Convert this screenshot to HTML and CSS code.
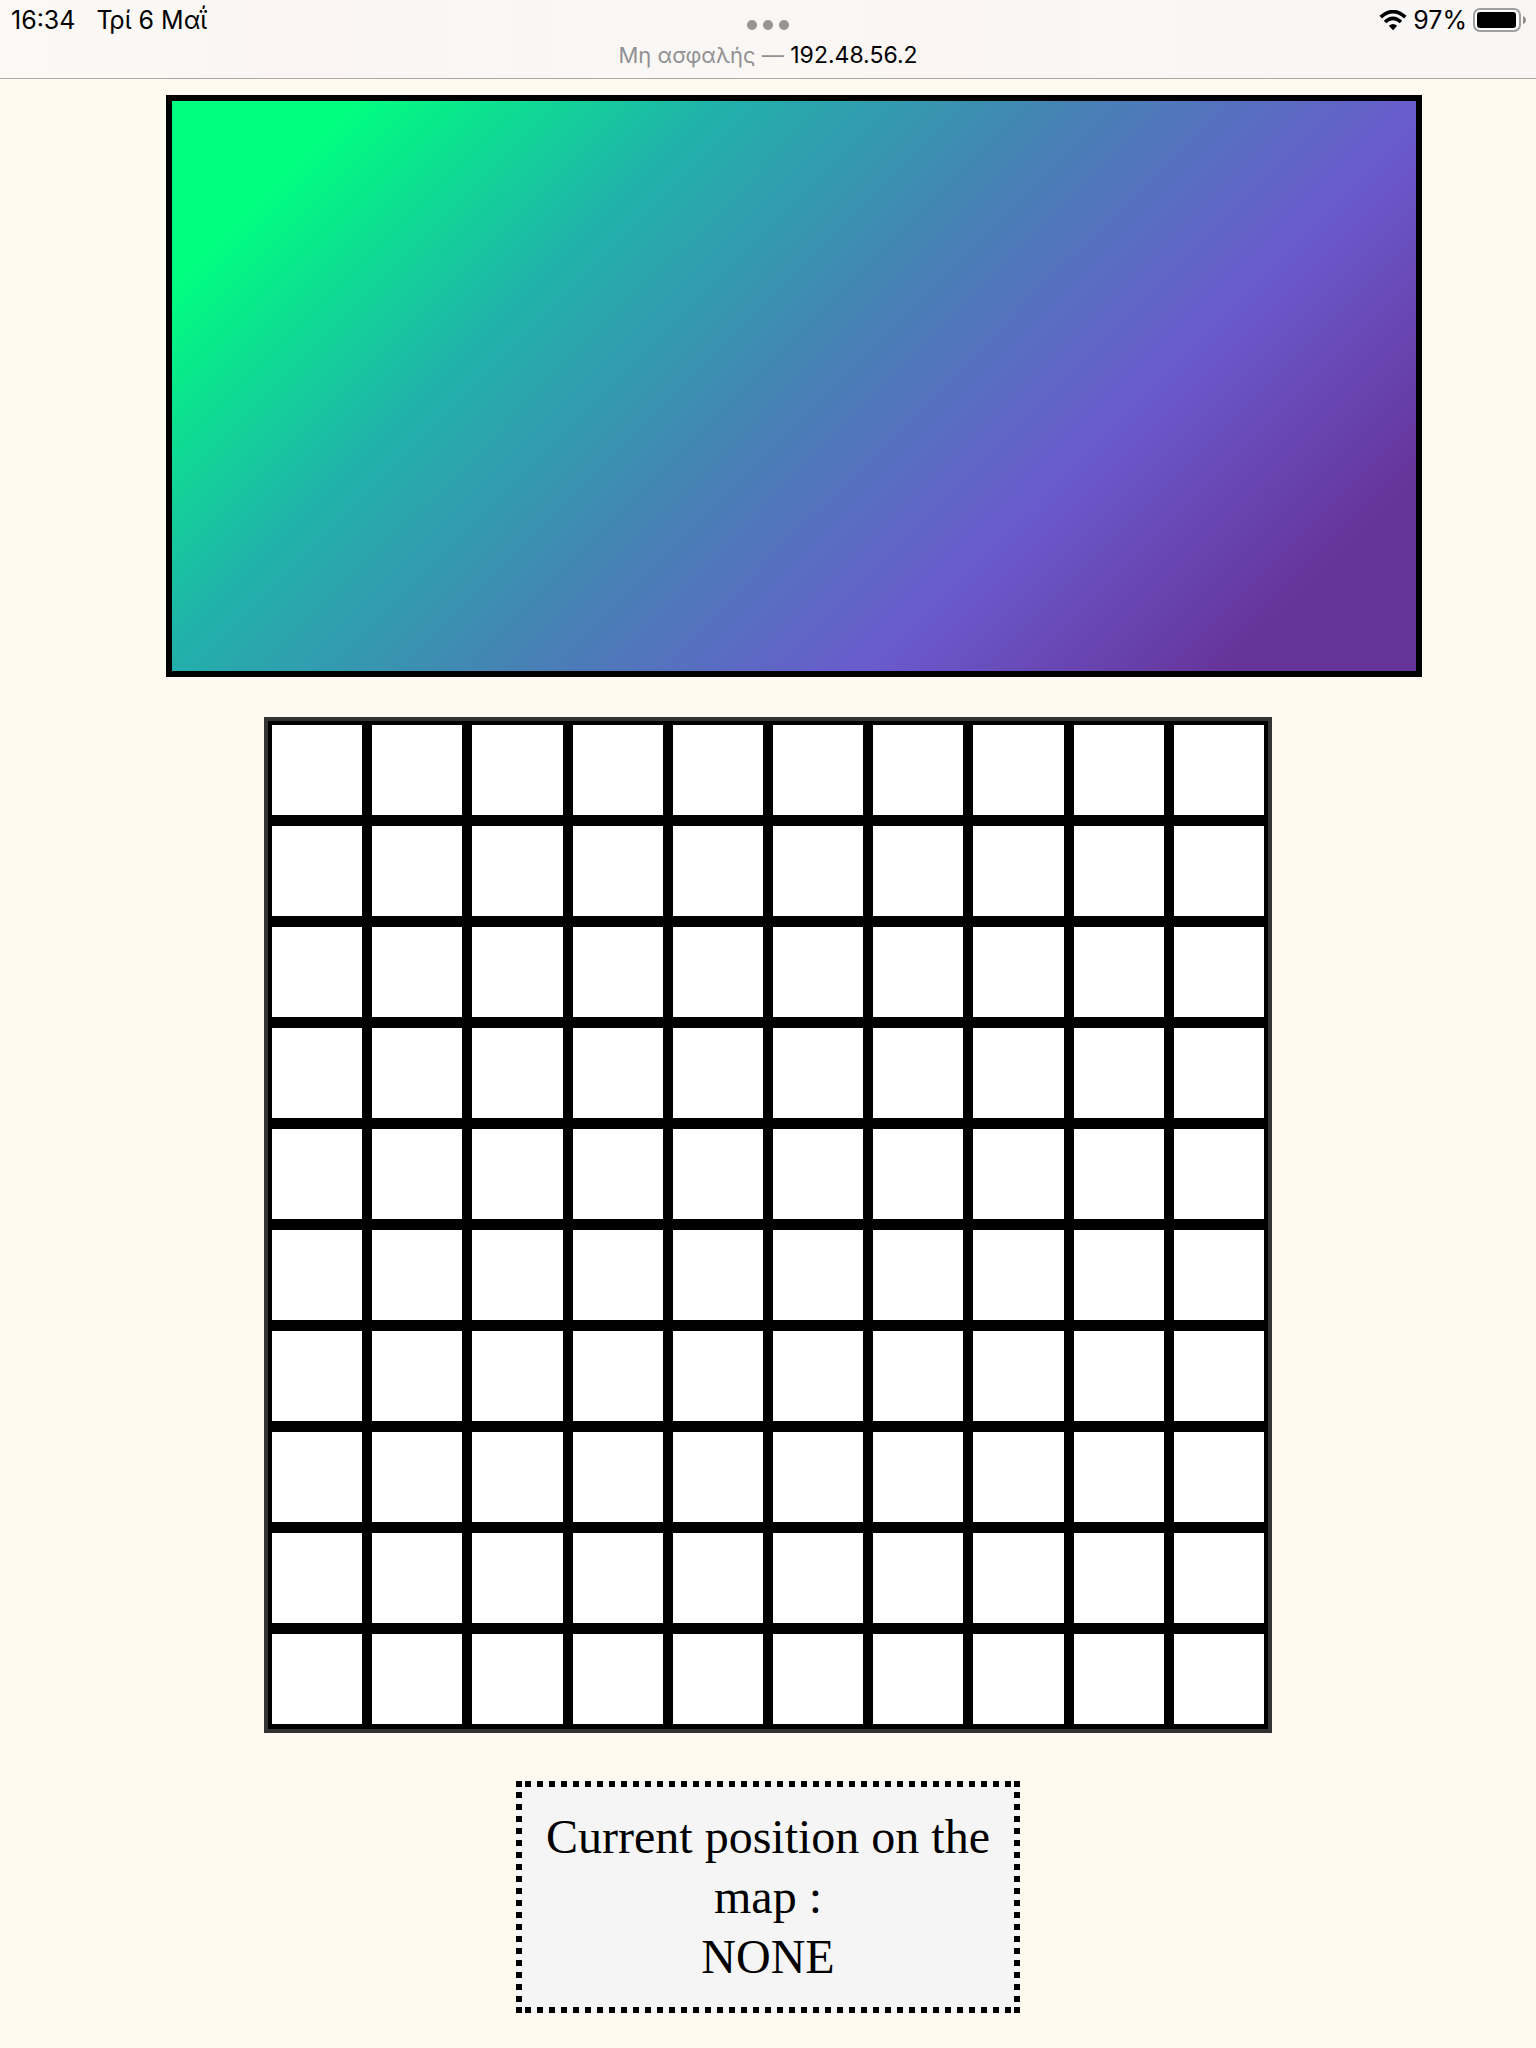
FILE: index.html
```html
<!DOCTYPE html>
<html lang="el">
<head>
<meta charset="utf-8">
<meta name="viewport" content="width=device-width, initial-scale=1">
<title>Map</title>
<link rel="stylesheet" href="styles.css">
</head>
<body>
<header class="bar">
  <div class="status">
    <div class="status-left"><time>16:34</time><span>Τρί 6 Μαΐ</span></div>
    <div class="dots"><i></i><i></i><i></i></div>
    <div class="status-right">
      <svg width="28" height="21" viewBox="0 0 28 21" aria-hidden="true">
        <g fill="none" stroke="#000" stroke-width="3.6">
          <path d="M1.700 7.200Q14-4 26.300 7.200"/>
          <path d="M6 12Q14 4.600 22 12"/>
        </g>
        <path d="M9.800 15.800Q14 12 18.200 15.800L14 20.200Z"/>
      </svg>
      <span>97%</span>
      <svg width="54" height="24" viewBox="0 0 54 24" aria-hidden="true">
        <rect x="1" y="1" width="46" height="22" rx="6" fill="#fff" fill-opacity=".5" stroke="#a09f9e" stroke-width="2"/>
        <rect x="4" y="4" width="39" height="16" rx="3"/>
        <path d="M50 8Q53 9 53 12T50 16Z" fill="#8f8e8d"/>
      </svg>
    </div>
  </div>
  <div class="address"><span class="insecure">Μη ασφαλής —</span> 192.48.56.2</div>
</header>
<main class="page">
  <div class="canvas"></div>
  <div class="board" id="board"></div>
  <div class="position">Current position on the map :<br>NONE</div>
</main>
<script src="board.js"></script>
</body>
</html>
```
FILE: styles.css
```css
* { box-sizing: border-box; }

body {
  margin: 0;
  background: floralwhite;
  color: #000;
  font-family: "Liberation Serif", "Times New Roman", serif;
}

.bar {
  height: 79px;
  padding: 5px 9px 0;
  border-bottom: 1px solid #acaaa7;
  background: linear-gradient(90deg, #fbf9f6, #faf5f4 20%, #f9f8f6 40%, #fbf6f4 60%, #f8f7f6 90%);
  font-family: Inter, "Noto Sans", sans-serif;
  font-size: 25px;
  line-height: 30px;
}

.status {
  display: grid;
  grid-template-columns: 1fr auto 1fr;
  height: 35px;
}

.status-left {
  display: flex;
  gap: 21px;
  padding-left: 2px;
  font-size: 25px;
}

.status-right {
  display: flex;
  justify-content: flex-end;
  align-items: center;
  gap: 6px;
  height: 30px;
}

.dots {
  display: flex;
  align-items: center;
  gap: 6px;
  height: 40px;
}

.dots i {
  width: 10px;
  height: 10px;
  border-radius: 50%;
  background: #9a9490;
}

.address {
  font-size: 23px;
  text-align: center;
}

.insecure {
  color: #929093;
  font-size: 22px;
}

.page {
  display: flex;
  flex-direction: column;
  align-items: center;
  padding: 16px 0 35px;
}

.canvas {
  align-self: stretch;
  height: 582px;
  margin: 0 114px 40px 166px;
  border: 6px solid #000;
  background: linear-gradient(135deg, springgreen 10%, lightseagreen 30%, steelblue 50%, slateblue 70%, rebeccapurple 90%);
}

.board {
  display: grid;
  grid-template-columns: repeat(10, 1fr);
  grid-auto-rows: 90px;
  gap: 11px 10px;
  width: 100%;
  max-width: 1008px;
  margin-bottom: 48px;
  padding: 4px 4px 5px;
  border: 4px solid #333;
  background: #000;
}

.cell { background: #fff; }

/* Square-dotted frame: filled corners plus repeating 6px squares on each side */
.position {
  --ink: linear-gradient(#000, #000);
  --across: linear-gradient(90deg, #000 50%, transparent 50%);
  --down: linear-gradient(#000 50%, transparent 50%);
  width: 100%;
  max-width: 504px;
  padding: 26px;
  background:
    var(--ink) left top / 6px 6px no-repeat,
    var(--ink) right top / 6px 6px no-repeat,
    var(--ink) left bottom / 6px 6px no-repeat,
    var(--ink) right bottom / 6px 6px no-repeat,
    var(--across) 9px top / 12px 6px repeat-x,
    var(--across) 9px bottom / 12px 6px repeat-x,
    var(--down) left 11px / 6px 12px repeat-y,
    var(--down) right 11px / 6px 12px repeat-y,
    whitesmoke;
  font-size: 48px;
  line-height: 60px;
  text-align: center;
}
```
FILE: board.js
```javascript
const board = document.getElementById("board");
for (let i = 0; i < 100; i++) {
  const cell = document.createElement("div");
  cell.className = "cell";
  board.append(cell);
}
```
